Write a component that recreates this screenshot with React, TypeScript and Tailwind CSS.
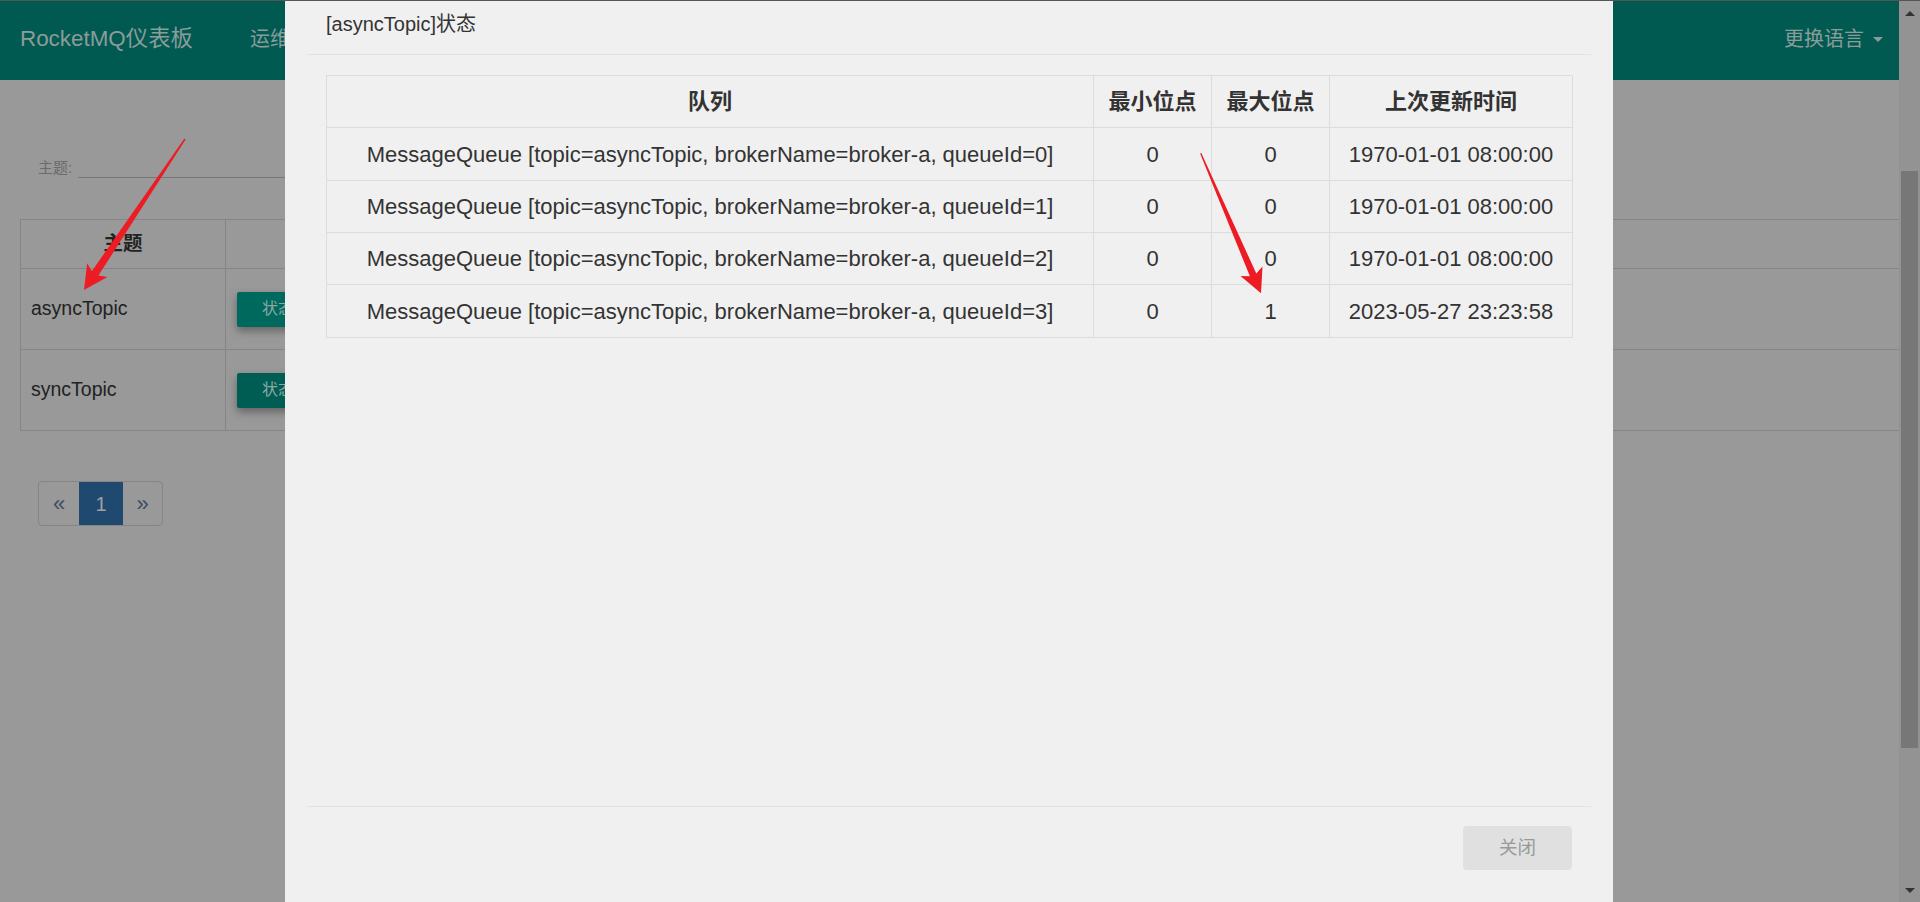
import React from "react";

const rows = [
  { q: 0, min: "0", max: "0", t: "1970-01-01 08:00:00" },
  { q: 1, min: "0", max: "0", t: "1970-01-01 08:00:00" },
  { q: 2, min: "0", max: "0", t: "1970-01-01 08:00:00" },
  { q: 3, min: "0", max: "1", t: "2023-05-27 23:23:58" },
];

function Arrows() {
  return (
    <svg
      className="pointer-events-none absolute left-0 top-0"
      width="1920"
      height="902"
      viewBox="0 0 1920 902"
    >
      <polygon
        points="185.6,139.4 98.4,275.6 107.4,276.9 84,290 87.2,263.3 91.8,271.2 184.4,138.6"
        fill="#ed1c24"
      />
      <polygon
        points="1201.3,153.1 1256.3,273.5 1262.5,266.5 1261,293.3 1240.5,275.9 1249.9,276.3 1200.1,153.5"
        fill="#ed1c24"
      />
    </svg>
  );
}

export default function App() {
  return (
    <div className="relative w-[1920px] h-[902px] overflow-hidden bg-[#999999] font-['Liberation_Sans','Noto_Sans_CJK_SC',sans-serif]">
      <div className="h-px bg-[#555555]" />
      <div className="flex h-[901px]">
        {/* page behind the backdrop */}
        <div className="w-[1899px] h-full overflow-hidden">
          <div className="h-[79px] bg-[#005a52] flex items-center pl-[20px] pr-[16px] pb-[4px]">
            <div className="text-[22.4px] text-[#8b9c99] whitespace-nowrap">RocketMQ仪表板</div>
            <div className="ml-[57px] text-[20px] text-[#8b9c99] whitespace-nowrap">运维</div>
            <div className="ml-auto flex items-center gap-[9px] text-[20px] text-[#8b9c99] whitespace-nowrap">
              <span>更换语言</span>
              <span className="w-0 h-0 border-l-[5px] border-r-[5px] border-t-[5px] border-l-transparent border-r-transparent border-t-[#8b9c99] mt-[2px]" />
            </div>
          </div>

          <div className="pl-[38px] pt-[77px] flex items-end h-[98px]">
            <span className="text-[15px] text-[#6b6b6b] leading-[20px]">主题:</span>
            <div className="ml-[6px] w-[420px] h-[20px] border-b border-[#777777]" />
          </div>

          <div className="ml-[20px] mt-[41px] border-t border-l border-[#858585] w-[1900px]">
            <div className="flex h-[49px] border-b border-[#858585]">
              <div className="w-[205px] border-r border-[#858585] flex items-center justify-center text-[19.5px] font-bold text-[#222222]">
                主题
              </div>
              <div className="flex-1" />
            </div>
            {["asyncTopic", "syncTopic"].map((t, i) => (
              <div key={t} className="flex h-[81px] border-b border-[#858585]">
                <div className="w-[205px] border-r border-[#858585] flex items-center pl-[10px] text-[19.5px] text-[#222222]">
                  {t}
                </div>
                <div className="flex-1 flex items-center pl-[11px]">
                  <div
                    className={
                      "h-[35px] w-[100px] rounded-[2px] flex items-center pl-[25px] text-[16px] text-[#8aa8a3] shadow-[0_4px_8px_rgba(0,0,0,0.35)] " +
                      (i === 0 ? "bg-[#00695d]" : "bg-[#005d53]")
                    }
                  >
                    状态
                  </div>
                </div>
              </div>
            ))}
          </div>

          <div className="ml-[38px] mt-[50px] flex h-[45px] w-[125px] border border-[#858585] rounded-[4px] overflow-hidden">
            <div className="w-[40px] flex items-center justify-center text-[22px] text-[#3d4f63]">«</div>
            <div className="w-[44px] flex items-center justify-center bg-[#1f496e] text-[20px] text-[#a0a0a0]">1</div>
            <div className="flex-1 flex items-center justify-center text-[22px] text-[#3d4f63]">»</div>
          </div>
        </div>

        {/* scrollbar */}
        <div className="w-[21px] h-full bg-[#939393] flex flex-col items-center">
          <div className="mt-[10px] w-0 h-0 border-l-[5px] border-r-[5px] border-b-[5px] border-l-transparent border-r-transparent border-b-[#333333]" />
          <div className="mt-[155px] w-[17px] h-[577px] bg-[#777777]" />
          <div className="mt-auto mb-[9px] w-0 h-0 border-l-[5px] border-r-[5px] border-t-[5px] border-l-transparent border-r-transparent border-t-[#333333]" />
        </div>
      </div>

      {/* modal */}
      <div className="absolute left-[285px] top-px w-[1328px] h-[901px] bg-[#f0f0f0] px-[22px] flex flex-col">
        <div className="h-[54px] border-b border-[#e2e2e2] pl-[19px] pt-[9px]">
          <div className="text-[20px] leading-[28px] text-[#333333]">[asyncTopic]状态</div>
        </div>
        <div className="h-[751px] px-[19px] pt-[20px]">
          <div className="grid grid-cols-[767px_118px_118px_243px] border-t border-l border-[#dcdcdc] text-[22px] text-[#333333]">
            {["队列", "最小位点", "最大位点", "上次更新时间"].map((h) => (
              <div
                key={h}
                className="h-[52.35px] border-r border-b border-[#dcdcdc] flex items-center justify-center font-bold whitespace-nowrap"
              >
                {h}
              </div>
            ))}
            {rows.map((r) => (
              <React.Fragment key={r.q}>
                <div className="h-[52.35px] border-r border-b border-[#dcdcdc] flex items-center justify-center whitespace-nowrap">
                  {`MessageQueue [topic=asyncTopic, brokerName=broker-a, queueId=${r.q}]`}
                </div>
                <div className="h-[52.35px] border-r border-b border-[#dcdcdc] flex items-center justify-center">
                  {r.min}
                </div>
                <div className="h-[52.35px] border-r border-b border-[#dcdcdc] flex items-center justify-center">
                  {r.max}
                </div>
                <div className="h-[52.35px] border-r border-b border-[#dcdcdc] flex items-center justify-center whitespace-nowrap">
                  {r.t}
                </div>
              </React.Fragment>
            ))}
          </div>
        </div>
        <div className="border-t border-[#e2e2e2] pt-[19px] pr-[19px] flex justify-end">
          <div className="w-[109px] h-[44px] rounded-[4px] bg-[#e0e0e0] flex items-center justify-center text-[18.5px] text-[#999999]">
            关闭
          </div>
        </div>
      </div>

      <Arrows />
    </div>
  );
}
